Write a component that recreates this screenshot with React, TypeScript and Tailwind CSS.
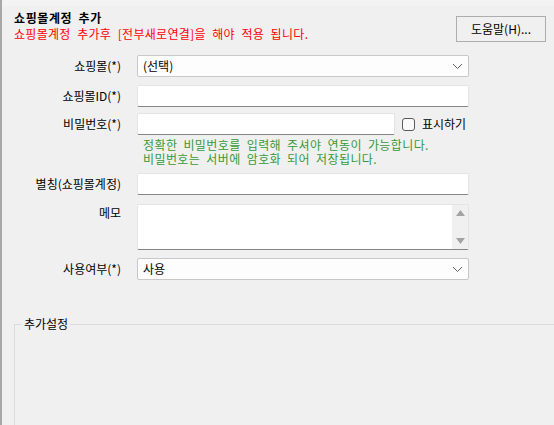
import React from "react";

const font = { fontFamily: '"Noto Sans CJK KR", "Noto Sans", sans-serif' };

function Chevron() {
  return (
    <svg width="11" height="7" viewBox="0 0 11 7" className="mr-[5px]">
      <polyline points="1,1 5.5,5.5 10,1" fill="none" stroke="#606060" strokeWidth="1" />
    </svg>
  );
}

function Select({ value }: { value: string }) {
  return (
    <div className="w-[332px] h-[22px] border border-[#c8c8c8] bg-[#fdfdfd] rounded-[2px] flex items-center justify-between">
      <span className="pl-[5px] text-[12px] text-black leading-none">{value}</span>
      <Chevron />
    </div>
  );
}

function TextBox({ w = 332, h = 22 }: { w?: number; h?: number }) {
  return (
    <div
      className="border border-[#e4e4e4] border-b-[#858585] bg-white rounded-[2px]"
      style={{ width: w, height: h }}
    />
  );
}

function Label({ children, top = false }: { children: React.ReactNode; top?: boolean }) {
  return (
    <div
      className={`w-[119px] shrink-0 text-right text-[12px] text-black leading-[16px] ${top ? "pt-[1px]" : ""}`}
    >
      {children}
    </div>
  );
}

export default function App() {
  return (
    <div className="w-[554px] h-[425px] bg-[#f0f0f0] flex overflow-hidden" style={font}>
      <div className="w-[2px] h-full bg-[#a8a8a8] shrink-0" />
      <div className="w-[552px] flex flex-col">
        <div className="h-[6px] bg-[#f3f3f3]" />
        <div className="flex justify-between w-[552px]">
          <div className="pl-[12px] pt-[4px]">
            <div className="text-[12px] font-bold leading-[16px] text-black tracking-[0.6px] [word-spacing:3px]">
              쇼핑몰계정 추가
            </div>
            <div className="text-[12px] leading-[16px] text-[#ff0000] tracking-[0.3px] [word-spacing:3.5px]">
              쇼핑몰계정 추가후 [전부새로연결]을 해야 적용 됩니다.
            </div>
          </div>
          <div className="shrink-0 mt-[10px] mr-[8px] w-[90px] h-[26px] border border-[#adadad] bg-[#f0f0f0] flex items-center justify-center text-[12px] text-black">
            도움말(H)...
          </div>
        </div>

        <div className="flex flex-col mt-[13px]">
          <div className="flex items-center gap-[16px]">
            <Label>쇼핑몰(*)</Label>
            <Select value="(선택)" />
          </div>
          <div className="flex items-center gap-[16px] mt-[8px]">
            <Label>쇼핑몰ID(*)</Label>
            <TextBox />
          </div>
          <div className="flex items-center gap-[16px] mt-[6px]">
            <Label>비밀번호(*)</Label>
            <TextBox w={258} />
            <div className="flex items-center ml-[-9px]">
              <div className="w-[13px] h-[13px] border border-[#5a5a5a] rounded-[3px] bg-[#fafafa]" />
              <span className="ml-[7px] text-[12px] text-black leading-none">표시하기</span>
            </div>
          </div>
          <div className="pl-[141px] mt-[3px] text-[12px] leading-[14px] text-[#36993a] tracking-[0.4px] [word-spacing:3px]">
            <div>정확한 비밀번호를 입력해 주셔야 연동이 가능합니다.</div>
            <div>비밀번호는 서버에 암호화 되어 저장됩니다.</div>
          </div>
          <div className="flex items-center gap-[16px] mt-[7px]">
            <Label>별칭(쇼핑몰계정)</Label>
            <TextBox />
          </div>
          <div className="flex items-start gap-[16px] mt-[9px]">
            <Label top>메모</Label>
            <div className="w-[332px] h-[46px] border border-[#e4e4e4] border-b-[#858585] bg-white rounded-[2px] flex justify-end">
              <div className="w-[16px] h-full bg-[#f0f0f0] flex flex-col items-center justify-between py-[5px]">
                <svg width="9" height="6" viewBox="0 0 9 6">
                  <polygon points="0,6 4.5,0 9,6" fill="#a3a3a3" />
                </svg>
                <svg width="9" height="6" viewBox="0 0 9 6">
                  <polygon points="0,0 4.5,6 9,0" fill="#a3a3a3" />
                </svg>
              </div>
            </div>
          </div>
          <div className="flex items-center gap-[16px] mt-[8px]">
            <Label>사용여부(*)</Label>
            <Select value="사용" />
          </div>
        </div>

        <div className="relative mt-[44px] ml-[12px] flex-1 border-t border-l border-[#dcdcdc]">
          <span className="absolute left-[7px] top-[-9px] px-[2px] bg-[#f0f0f0] text-[12px] leading-[16px] text-black">
            추가설정
          </span>
        </div>
      </div>
    </div>
  );
}
